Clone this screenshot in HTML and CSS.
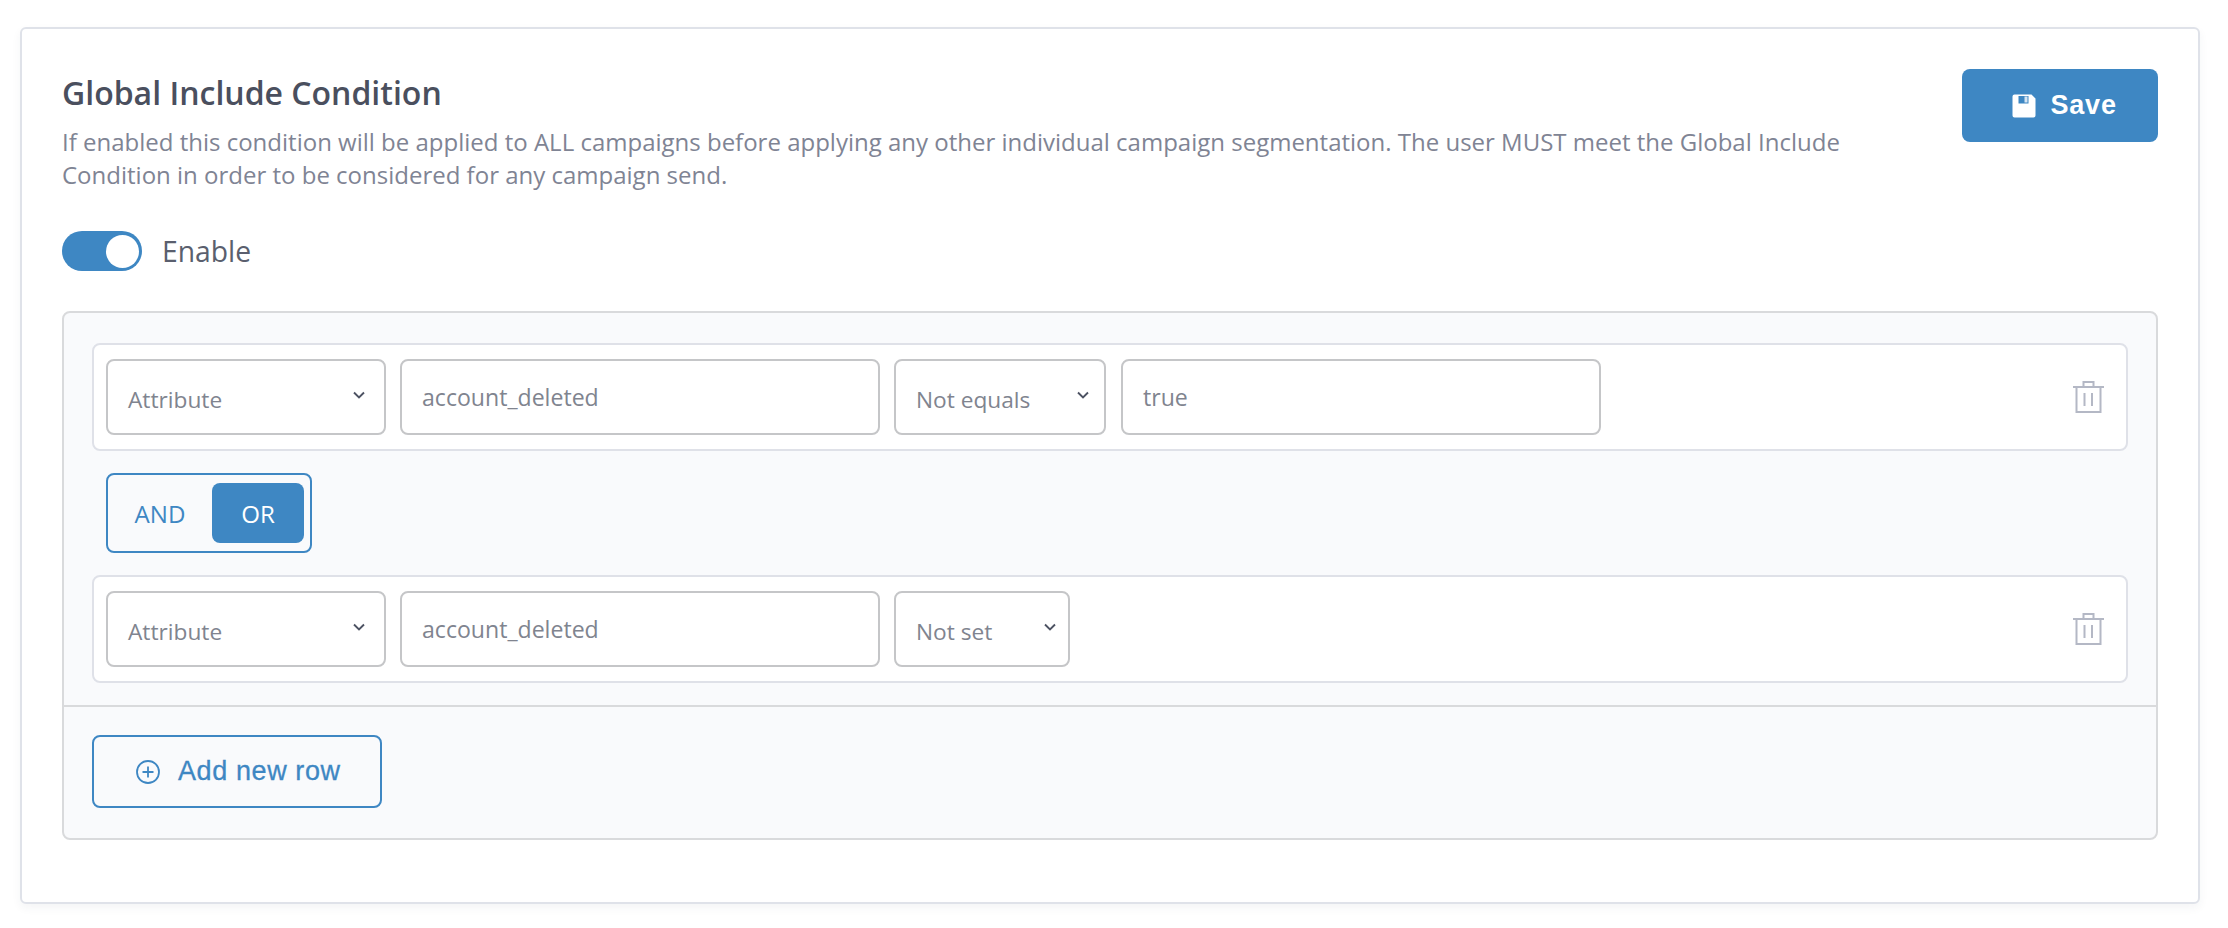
FILE: index.html
```html
<!DOCTYPE html>
<html lang="en">
<head>
<meta charset="utf-8">
<title>Global Include Condition</title>
<link rel="stylesheet" href="styles.css">
</head>
<body>
<section class="card">
  <header class="card-head">
    <div class="card-intro">
      <h2 class="card-title">Global Include Condition</h2>
      <p class="card-desc">If enabled this condition will be applied to ALL campaigns before applying any other individual campaign segmentation. The user MUST meet the Global Include Condition in order to be considered for any campaign send.</p>
    </div>
    <button class="save-btn" type="button">
      <svg class="save-icon" viewBox="0 0 24 24" aria-hidden="true">
        <path fill="#fff" d="M2.500 0.500H19.500L23.500 4.500V21.500a2 2 0 0 1-2 2H2.500a2 2 0 0 1-2-2V2.500a2 2 0 0 1 2-2Z"/>
        <rect x="6.500" y="2" width="10" height="7.500" fill="#3e87c3"/>
        <rect x="12.500" y="2.500" width="3" height="6" fill="#d4e4f2"/>
      </svg>
      <span>Save</span>
    </button>
  </header>

  <div class="toggle-row">
    <span class="toggle"><span class="toggle-knob"></span></span>
    <span class="toggle-label">Enable</span>
  </div>

  <div class="panel">
    <div class="panel-rows">
      <div class="cond-row">
        <div class="field select w-attr"><span class="select-text">Attribute</span><svg class="chev" viewBox="0 0 12 8"><path d="M1 1.500 6 6.500 11 1.500" fill="none" stroke="#4c5262" stroke-width="1.900"/></svg></div>
        <div class="field text-field w-input">account_deleted</div>
        <div class="field select w-op"><span class="select-text">Not equals</span><svg class="chev" viewBox="0 0 12 8"><path d="M1 1.500 6 6.500 11 1.500" fill="none" stroke="#4c5262" stroke-width="1.900"/></svg></div>
        <div class="field text-field w-input">true</div>
        <svg class="trash" viewBox="0 0 31 32" aria-hidden="true"><path d="M0 6H31M3.500 6V31H27.500V6M10.500 6V1H20.500V6M11.500 12V25M19 12V25" fill="none" stroke="#b4b8c5" stroke-width="2"/></svg>
      </div>

      <div class="logic">
        <span class="logic-opt">AND</span>
        <span class="logic-opt is-active">OR</span>
      </div>

      <div class="cond-row">
        <div class="field select w-attr"><span class="select-text">Attribute</span><svg class="chev" viewBox="0 0 12 8"><path d="M1 1.500 6 6.500 11 1.500" fill="none" stroke="#4c5262" stroke-width="1.900"/></svg></div>
        <div class="field text-field w-input">account_deleted</div>
        <div class="field select w-notset"><span class="select-text">Not set</span><svg class="chev" viewBox="0 0 12 8"><path d="M1 1.500 6 6.500 11 1.500" fill="none" stroke="#4c5262" stroke-width="1.900"/></svg></div>
        <svg class="trash" viewBox="0 0 31 32" aria-hidden="true"><path d="M0 6H31M3.500 6V31H27.500V6M10.500 6V1H20.500V6M11.500 12V25M19 12V25" fill="none" stroke="#b4b8c5" stroke-width="2"/></svg>
      </div>
    </div>
    <div class="panel-foot">
      <button class="add-btn" type="button">
        <svg class="add-icon" viewBox="0 0 24 24" aria-hidden="true"><circle cx="12" cy="12" r="11" fill="none" stroke="#3e87c3" stroke-width="1.800"/><path d="M12 6.500V17.500M6.500 12H17.500" fill="none" stroke="#3e87c3" stroke-width="1.800"/></svg>
        <span>Add new row</span>
      </button>
    </div>
  </div>
</section>
</body>
</html>
```

FILE: styles.css
```css
* { box-sizing: border-box; }

html, body { margin: 0; background: #fff; }

body {
  height: 928px;
  padding: 27px 28px 0 20px;
  font-family: "Open Sans", "Noto Sans", sans-serif;
  overflow: hidden;
}

.card {
  height: 877px;
  border: 2px solid #dfe2e9;
  border-radius: 6px;
  padding: 40px 40px 0;
  background: #fff;
  box-shadow: 0 4px 10px rgba(40, 50, 80, 0.05);
}

.card-head {
  display: flex;
  justify-content: space-between;
  align-items: flex-start;
}

.card-intro { width: 1790px; padding-top: 2px; }

.card-title {
  margin: 0;
  font-size: 32px;
  line-height: 44px;
  font-weight: 600;
  color: #4a4f5e;
}

.card-desc {
  margin: 10px 0 0;
  font-size: 24px;
  line-height: 33px;
  color: #7f8494;
}

.save-btn {
  display: flex;
  align-items: center;
  gap: 15px;
  width: 196px;
  height: 73px;
  padding: 0 0 0 49.500px;
  border: 0;
  border-radius: 8px;
  background: #3e87c3;
  color: #fff;
  font-family: "Liberation Sans", Arial, sans-serif;
  font-weight: 700;
  font-size: 27px;
  letter-spacing: 0.800px;
}

.save-icon { width: 24px; height: 24px; flex: none; }

.toggle-row {
  display: flex;
  align-items: center;
  gap: 20px;
  margin-top: 40px;
  height: 40px;
}

.toggle {
  display: flex;
  align-items: center;
  justify-content: flex-end;
  width: 80px;
  height: 40px;
  padding-right: 3px;
  border-radius: 20px;
  background: #3e87c3;
}

.toggle-knob {
  width: 33px;
  height: 33px;
  border-radius: 50%;
  background: #fff;
}

.toggle-label {
  font-size: 28.300px;
  color: #5a5f6e;
}

.panel {
  margin-top: 40px;
  border: 2px solid #d9dadc;
  border-radius: 8px;
  background: #f9fafc;
}

.panel-rows {
  padding: 30px 28px 22px;
  border-bottom: 2px solid #d9dadc;
}

.cond-row {
  display: flex;
  align-items: center;
  gap: 14px;
  height: 108px;
  padding: 0 22px 0 12px;
  border: 2px solid #dfe1e8;
  border-radius: 8px;
  background: #fff;
}

.field {
  display: flex;
  align-items: center;
  height: 76px;
  padding: 0 20px;
  border: 2px solid #c5c6c8;
  border-radius: 8px;
  background: #fff;
  font-size: 22.700px;
  color: #80848f;
}

.text-field { font-size: 23.100px; }

.select { justify-content: space-between; }
.select-text { position: relative; top: 2px; }

.w-attr { width: 280px; padding-right: 19px; }
.w-input { width: 480px; }
.w-op { width: 212px; padding-right: 15px; margin-right: 1px; }
.w-notset { width: 176px; padding-right: 12px; }

.chev { width: 12px; height: 8px; margin-top: -4px; }

.trash { width: 31px; height: 32px; margin-left: auto; }

.logic {
  display: flex;
  align-items: center;
  justify-content: space-between;
  width: 206px;
  height: 80px;
  margin: 22px 0 22px 14px;
  padding: 0 6px 0 0;
  border: 2px solid #3e87c3;
  border-radius: 8px;
  font-size: 24.100px;
  color: #3e87c3;
}

.logic-opt {
  display: flex;
  align-items: center;
  justify-content: center;
  flex: 1;
  height: 60px;
}

.logic-opt.is-active {
  flex: 0 0 92px;
  border-radius: 8px;
  background: #3e87c3;
  color: #fff;
}

.panel-foot { padding: 28px 28px 30px; }

.add-btn {
  display: flex;
  align-items: center;
  gap: 18px;
  width: 290px;
  height: 73px;
  padding: 0 0 0 42px;
  border: 2px solid #3e87c3;
  border-radius: 8px;
  background: transparent;
  color: #3e87c3;
  font-family: "Liberation Sans", Arial, sans-serif;
  font-size: 27px;
  letter-spacing: 0.600px;
  -webkit-text-stroke: 0.300px #3e87c3;
}

.add-icon { width: 24px; height: 24px; flex: none; }
```
